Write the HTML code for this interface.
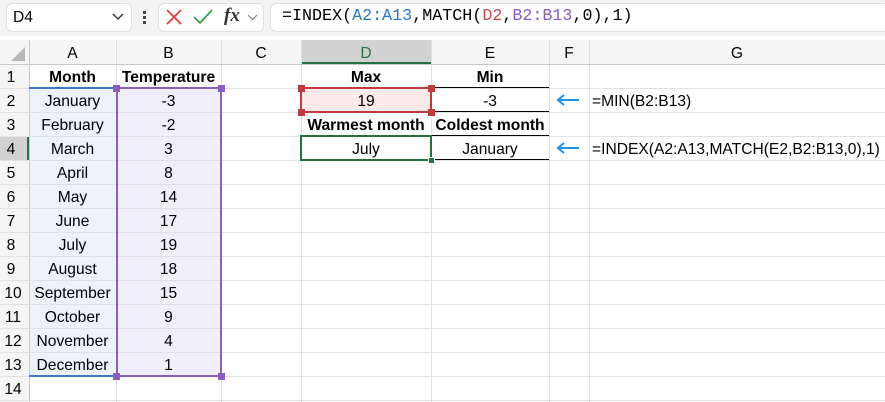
<!DOCTYPE html>
<html><head><meta charset="utf-8"><style>
*{box-sizing:border-box;margin:0;padding:0}
body{width:885px;height:402px;background:#fff;font-family:"Liberation Sans",sans-serif;position:relative;overflow:hidden;color:#000}
.a{position:absolute}
.box{position:absolute;border:1px solid #e0e0e0;border-radius:6px;background:#fff}
.c{position:absolute;height:24px;line-height:24px;padding-top:2px;text-align:center;font-size:15.6px}
.b{font-weight:bold}
.vl{position:absolute;width:1px;background:#e1e1e1;top:40px;height:362px}
.hl{position:absolute;height:1px;background:#e1e1e1;left:0;width:885px}
.mono{font-family:"Liberation Mono",monospace}
.h{position:absolute;width:7px;height:7px}
</style></head><body>
<div class="a" style="left:0;top:0;width:885px;height:36px;background:#f3f3f3"></div>
<div class="box" style="left:6px;top:3px;width:126px;height:29px"></div>
<div class="a" style="left:13px;top:9px;font-size:15.6px">D4</div>
<svg class="a" style="left:112px;top:13px" width="12" height="8"><path d="M1 1L6 6L11 1" fill="none" stroke="#333" stroke-width="1.4"/></svg>
<div class="a" style="left:143px;top:11px;width:3px;height:3px;background:#444"></div>
<div class="a" style="left:143px;top:16px;width:3px;height:3px;background:#444"></div>
<div class="a" style="left:143px;top:21px;width:3px;height:3px;background:#444"></div>
<div class="box" style="left:158px;top:3px;width:106px;height:29px"></div>
<svg class="a" style="left:166px;top:9px" width="16" height="16"><path d="M1 1L15 15M15 1L1 15" stroke="#e04040" stroke-width="1.8"/></svg>
<svg class="a" style="left:193px;top:9px" width="20" height="16"><path d="M1 8L7 14L19 1" fill="none" stroke="#3aa04a" stroke-width="1.8"/></svg>
<div class="a" style="left:224px;top:5px;font:italic bold 19px 'Liberation Serif',serif;color:#333">fx</div>
<svg class="a" style="left:247px;top:14px" width="11" height="7"><path d="M1 1L5.5 5.5L10 1" fill="none" stroke="#888" stroke-width="1.2"/></svg>
<div class="box" style="left:270px;top:3px;width:620px;height:29px"></div>
<div class="a mono" style="left:282px;top:7px;font-size:16.7px;white-space:pre">=INDEX(<span style="color:#2a78c8">A2:A13</span>,MATCH(<span style="color:#c0504d">D2</span>,<span style="color:#8a5cc0">B2:B13</span>,0),1)</div>

<div class="a" style="left:0;top:40px;width:885px;height:24px;background:#f5f5f5"></div>
<div class="a" style="left:0;top:40px;width:29px;height:362px;background:#f5f5f5"></div>
<div class="a" style="left:301px;top:40px;width:130px;height:24px;background:#d2d2d2;border-bottom:2px solid #217346"></div>
<div class="a" style="left:0;top:136px;width:29px;height:24px;background:#d2d2d2;border-right:2px solid #217346"></div>
<svg class="a" style="left:10px;top:46px" width="16" height="16"><path d="M15 1L15 15L1 15Z" fill="#b8b8b8"/></svg>

<div class="a" style="left:30px;top:89px;width:86px;height:287px;background:#ebf2fa"></div>
<div class="a" style="left:117px;top:89px;width:104px;height:287px;background:#f0eef8"></div>
<div class="a" style="left:301px;top:89px;width:130px;height:23px;background:#f9e9e9"></div>

<div class="vl" style="left:29px;background:#c8c8c8"></div>
<div class="vl" style="left:116px"></div><div class="vl" style="left:221px"></div><div class="vl" style="left:301px"></div><div class="vl" style="left:431px"></div><div class="vl" style="left:549px"></div><div class="vl" style="left:589px"></div>
<div class="hl" style="top:64px;background:#c8c8c8"></div>
<div class="hl" style="top:88px"></div><div class="hl" style="top:112px"></div><div class="hl" style="top:136px"></div><div class="hl" style="top:160px"></div><div class="hl" style="top:184px"></div><div class="hl" style="top:208px"></div><div class="hl" style="top:232px"></div><div class="hl" style="top:256px"></div><div class="hl" style="top:280px"></div><div class="hl" style="top:304px"></div><div class="hl" style="top:328px"></div><div class="hl" style="top:352px"></div><div class="hl" style="top:376px"></div><div class="hl" style="top:400px"></div>

<div class="c" style="left:29px;top:40px;width:87px">A</div>
<div class="c" style="left:116px;top:40px;width:105px">B</div>
<div class="c" style="left:221px;top:40px;width:80px">C</div>
<div class="c" style="left:301px;top:40px;width:130px;color:#217346">D</div>
<div class="c" style="left:431px;top:40px;width:118px">E</div>
<div class="c" style="left:549px;top:40px;width:40px">F</div>
<div class="c" style="left:589px;top:40px;width:296px">G</div>

<div class="c" style="left:0;top:64px;width:22px">1</div><div class="c" style="left:0;top:88px;width:22px">2</div><div class="c" style="left:0;top:112px;width:22px">3</div><div class="c" style="left:0;top:136px;width:22px">4</div><div class="c" style="left:0;top:160px;width:22px">5</div><div class="c" style="left:0;top:184px;width:22px">6</div><div class="c" style="left:0;top:208px;width:22px">7</div><div class="c" style="left:0;top:232px;width:22px">8</div><div class="c" style="left:0;top:256px;width:22px">9</div><div class="c" style="left:0;top:280px;width:26px">10</div><div class="c" style="left:0;top:304px;width:26px">11</div><div class="c" style="left:0;top:328px;width:26px">12</div><div class="c" style="left:0;top:352px;width:26px">13</div><div class="c" style="left:0;top:376px;width:26px">14</div>

<div class="c b" style="left:29px;top:64px;width:87px">Month</div>
<div class="c b" style="left:116px;top:64px;width:105px">Temperature</div>
<div class="c" style="left:29px;top:88px;width:87px">January</div><div class="c" style="left:116px;top:88px;width:105px">-3</div>
<div class="c" style="left:29px;top:112px;width:87px">February</div><div class="c" style="left:116px;top:112px;width:105px">-2</div>
<div class="c" style="left:29px;top:136px;width:87px">March</div><div class="c" style="left:116px;top:136px;width:105px">3</div>
<div class="c" style="left:29px;top:160px;width:87px">April</div><div class="c" style="left:116px;top:160px;width:105px">8</div>
<div class="c" style="left:29px;top:184px;width:87px">May</div><div class="c" style="left:116px;top:184px;width:105px">14</div>
<div class="c" style="left:29px;top:208px;width:87px">June</div><div class="c" style="left:116px;top:208px;width:105px">17</div>
<div class="c" style="left:29px;top:232px;width:87px">July</div><div class="c" style="left:116px;top:232px;width:105px">19</div>
<div class="c" style="left:29px;top:256px;width:87px">August</div><div class="c" style="left:116px;top:256px;width:105px">18</div>
<div class="c" style="left:29px;top:280px;width:87px">September</div><div class="c" style="left:116px;top:280px;width:105px">15</div>
<div class="c" style="left:29px;top:304px;width:87px">October</div><div class="c" style="left:116px;top:304px;width:105px">9</div>
<div class="c" style="left:29px;top:328px;width:87px">November</div><div class="c" style="left:116px;top:328px;width:105px">4</div>
<div class="c" style="left:29px;top:352px;width:87px">December</div><div class="c" style="left:116px;top:352px;width:105px">1</div>

<div class="c b" style="left:301px;top:64px;width:130px">Max</div>
<div class="c b" style="left:431px;top:64px;width:118px">Min</div>
<div class="c" style="left:301px;top:88px;width:130px">19</div>
<div class="c" style="left:431px;top:88px;width:118px">-3</div>
<div class="c b" style="left:301px;top:112px;width:130px">Warmest month</div>
<div class="c b" style="left:431px;top:112px;width:118px">Coldest month</div>
<div class="c" style="left:301px;top:136px;width:130px">July</div>
<div class="c" style="left:431px;top:136px;width:118px">January</div>
<div class="a" style="left:431px;top:87px;width:118px;height:1px;background:#000"></div>
<div class="a" style="left:431px;top:111px;width:118px;height:1px;background:#000"></div>
<div class="a" style="left:431px;top:135px;width:118px;height:1px;background:#000"></div>
<div class="a" style="left:301px;top:111px;width:130px;height:1px;background:#000"></div>
<div class="a" style="left:431px;top:159px;width:118px;height:1px;background:#000"></div>

<svg class="a" style="left:556px;top:93px" width="24" height="14"><path d="M23 7H3M8 2L2 7L8 12" fill="none" stroke="#1e90e8" stroke-width="2"/></svg>
<svg class="a" style="left:556px;top:141px" width="24" height="14"><path d="M23 7H3M8 2L2 7L8 12" fill="none" stroke="#1e90e8" stroke-width="2"/></svg>
<div class="c" style="left:592px;top:88px;text-align:left">=MIN(B2:B13)</div>
<div class="c" style="left:592px;top:136px;text-align:left">=INDEX(A2:A13,MATCH(E2,B2:B13,0),1)</div>

<div class="a" style="left:29px;top:87px;width:88px;height:290px;border-top:2px solid #3a78c8;border-bottom:2px solid #3a78c8"></div>
<div class="a" style="left:116px;top:87px;width:106px;height:290px;border:2px solid #8a5cc0"></div>
<div class="h" style="left:113px;top:85px;background:#8a5cc0"></div><div class="h" style="left:218px;top:85px;background:#8a5cc0"></div>
<div class="h" style="left:113px;top:373px;background:#8a5cc0"></div><div class="h" style="left:218px;top:373px;background:#8a5cc0"></div>
<div class="a" style="left:300px;top:87px;width:132px;height:26px;border:2px solid #c0393b"></div>
<div class="h" style="left:298px;top:85px;background:#c0393b"></div><div class="h" style="left:428px;top:85px;background:#c0393b"></div>
<div class="h" style="left:298px;top:109px;background:#c0393b"></div><div class="h" style="left:428px;top:109px;background:#c0393b"></div>
<div class="a" style="left:300px;top:135px;width:132px;height:26px;border:2px solid #217346"></div>
<div class="h" style="left:428px;top:157px;background:#217346;border:1px solid #fff;width:7px;height:7px"></div>
</body></html>
